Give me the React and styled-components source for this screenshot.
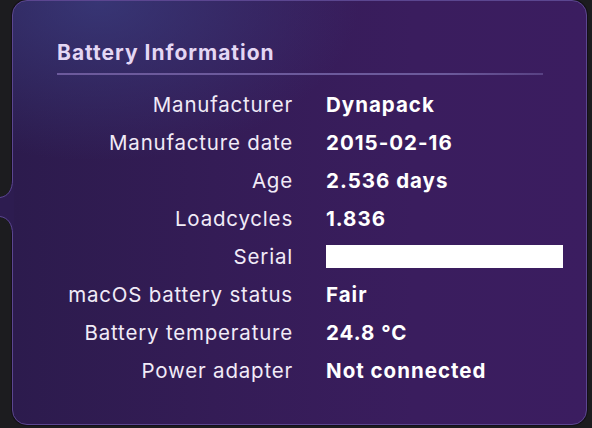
import styled, { createGlobalStyle } from 'styled-components';

const GlobalStyle = createGlobalStyle`
  html, body {
    margin: 0;
    padding: 0;
    background: #1c1c1f;
  }
  body {
    font-family: Inter, "Noto Sans", "Liberation Sans", sans-serif;
    -webkit-font-smoothing: antialiased;
  }
`;

const rows = [
  ['Manufacturer', 'Dynapack'],
  ['Manufacture date', '2015-02-16'],
  ['Age', '2.536 days'],
  ['Loadcycles', '1.836'],
  ['Serial', null],
  ['macOS battery status', 'Fair'],
  ['Battery temperature', '24.8 °C'],
  ['Power adapter', 'Not connected'],
];

const App = () => {
  return (
    <>
      <GlobalStyle />
      <Page>
        <Panel>
          <Notch width="14" height="54" viewBox="0 0 14 54">
            <path d="M12,0 C12,10 8,16 0,17 L0,37 C8,38 12,44 12,54 L14,54 L14,0 Z" fill="#2d1c50" />
            <path d="M12.5,0 C12.5,10 8,16.5 0,17.5 M0,36.5 C8,37.5 12.5,44 12.5,54" fill="none" stroke="#5b4690" strokeWidth="1" />
          </Notch>
          <Title>Battery Information</Title>
          <Divider />
          <InfoGrid>
            {rows.map(([label, value]) => (
              <Row key={label}>
                <Label>{label}</Label>
                {value === null ? <Redacted /> : <Value>{value}</Value>}
              </Row>
            ))}
          </InfoGrid>
        </Panel>
      </Page>
    </>
  );
};

export default App;

// Styled-components
const Page = styled.div`
  width: 592px;
  height: 428px;
  padding: 0 5px 3px 12px;
  box-sizing: border-box;
  display: flex;
`;

const Panel = styled.div`
  position: relative;
  flex: 1;
  box-sizing: border-box;
  border-radius: 15px;
  border: 1px solid #5b4690;
  box-shadow: 0 0 0 1px #141018;
  background:
    radial-gradient(ellipse 260px 160px at 15% 0%, rgba(58, 62, 128, 0.75), rgba(58, 62, 128, 0) 100%),
    linear-gradient(to right, #2c1b4d 0%, #341c56 35%, #3a1d5e 70%, #3b1d60 100%);
  padding: 39px 23px 0 44px;
  display: flex;
  flex-direction: column;
`;

const Notch = styled.svg`
  position: absolute;
  left: -13px;
  top: 179px;
  display: block;
`;

const Title = styled.h2`
  margin: 0;
  font-size: 21px;
  line-height: 26px;
  font-weight: 700;
  color: #e4d7f4;
  letter-spacing: 1px;
`;

const Divider = styled.div`
  height: 2px;
  margin: 7px 20px 0 0;
  background: linear-gradient(to right, #6c5a9c 0%, #6c5a9c 80%, rgba(108, 90, 156, 0.6) 100%);
`;

const InfoGrid = styled.div`
  display: grid;
  grid-template-columns: 236px 1fr;
  column-gap: 33px;
  margin-top: 10px;
`;

const Row = styled.div`
  display: contents;
`;

const Label = styled.div`
  height: 38.1px;
  display: flex;
  align-items: center;
  justify-content: flex-end;
  font-size: 20.5px;
  font-weight: 400;
  letter-spacing: 0.8px;
  color: #f1ebf7;
  white-space: nowrap;
`;

const Value = styled.div`
  height: 38.1px;
  display: flex;
  align-items: center;
  font-size: 20.5px;
  font-weight: 700;
  letter-spacing: 1px;
  color: #ffffff;
  white-space: nowrap;
`;

const Redacted = styled.div`
  align-self: center;
  width: 237px;
  height: 23px;
  background: #ffffff;
`;
